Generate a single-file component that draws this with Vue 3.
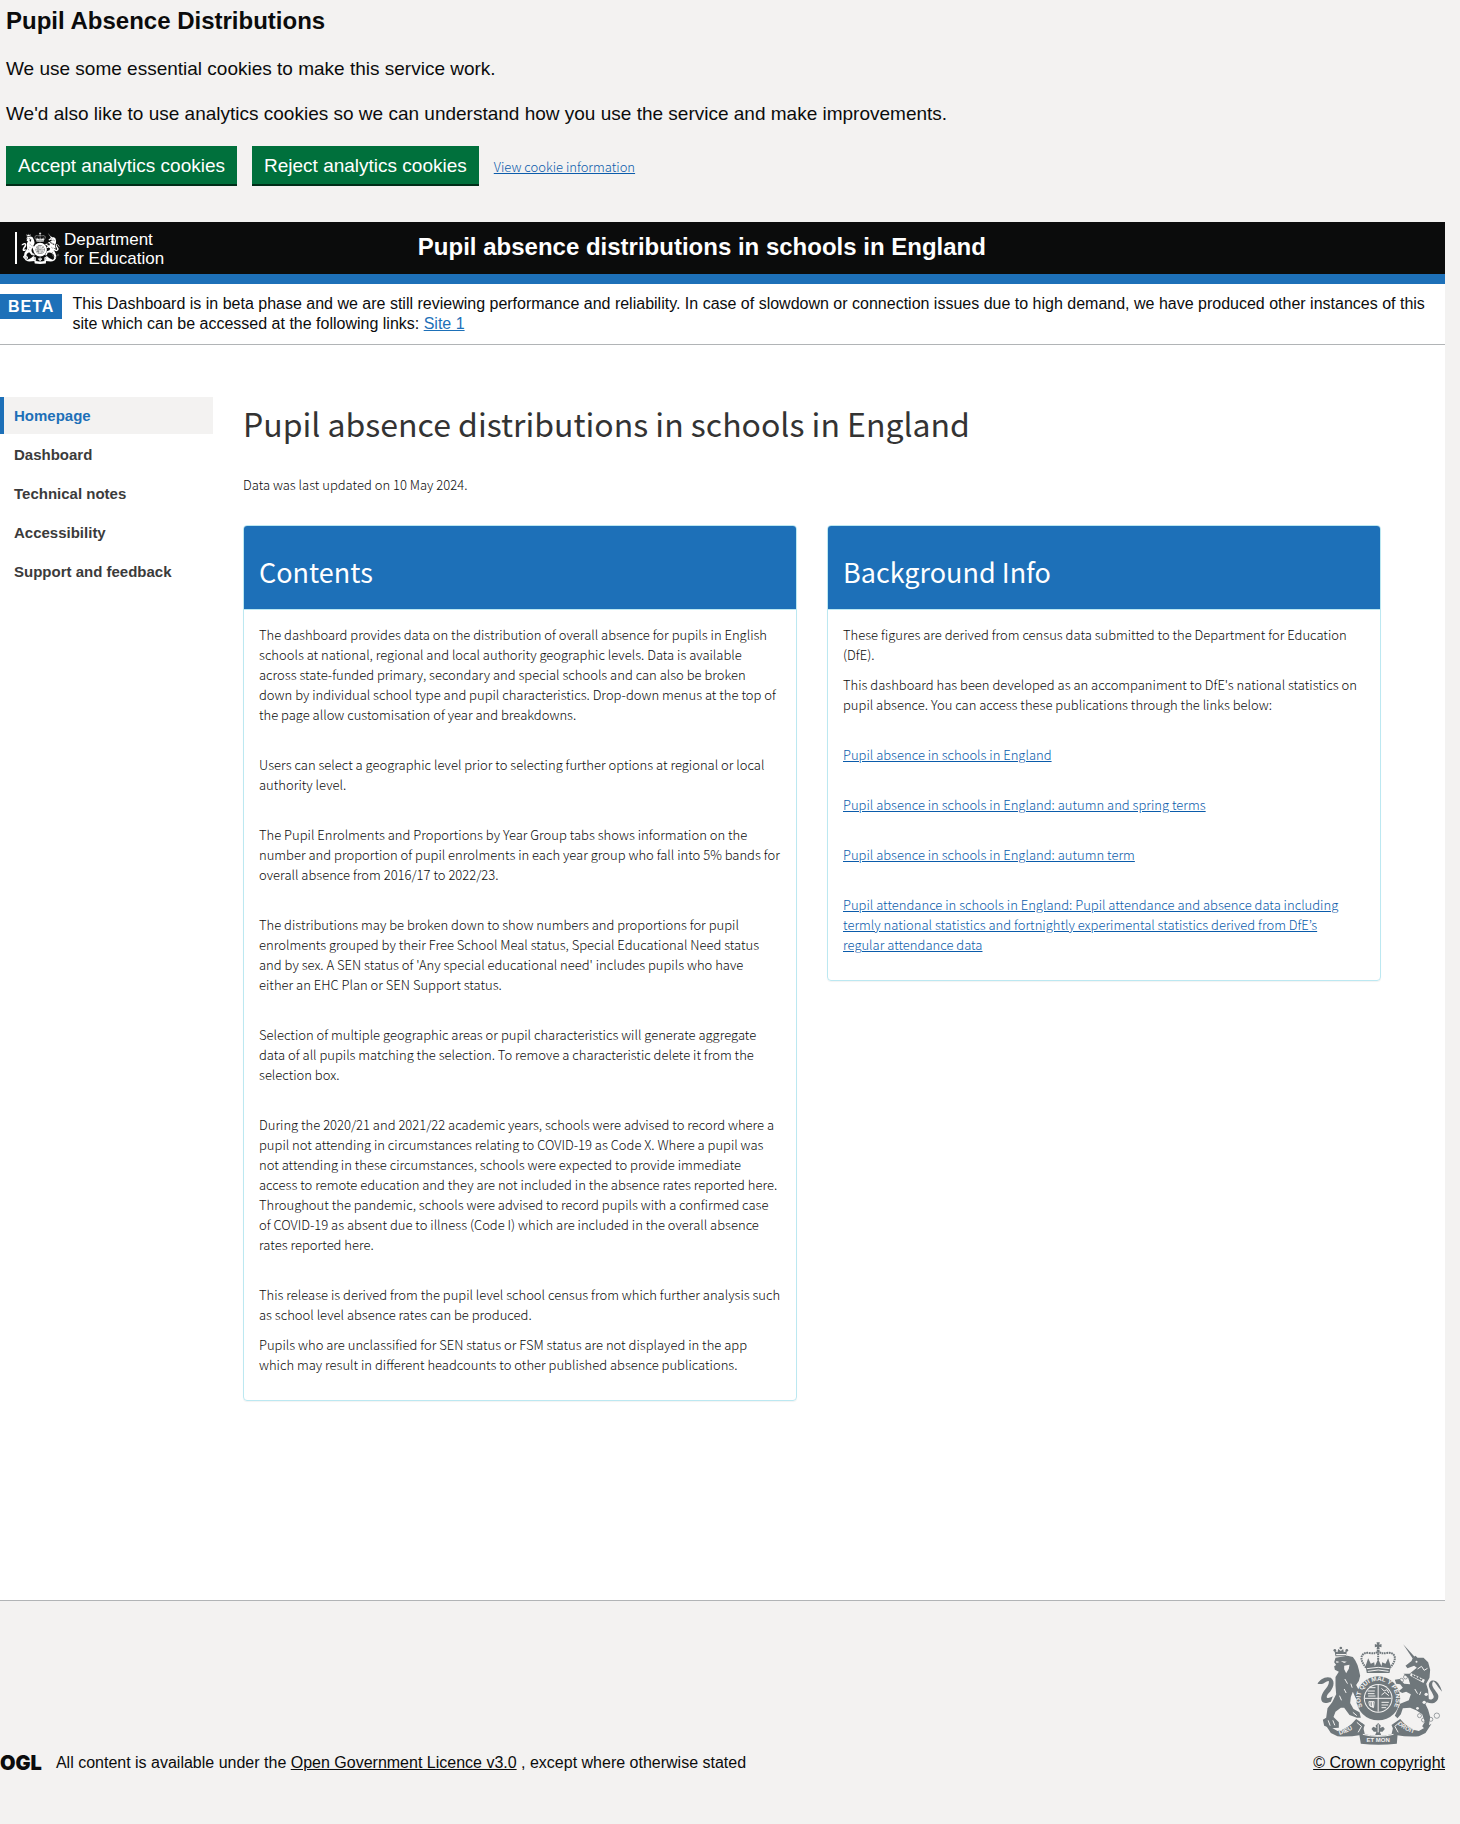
<script setup>
const navItems = ['Homepage', 'Dashboard', 'Technical notes', 'Accessibility', 'Support and feedback']

const contents = [
  {
    text: `The dashboard provides data on the distribution of overall absence for pupils in English
schools at national, regional and local authority geographic levels. Data is available
across state-funded primary, secondary and special schools and can also be broken
down by individual school type and pupil characteristics. Drop-down menus at the top of
the page allow customisation of year and breakdowns.`
  },
  {
    text: `Users can select a geographic level prior to selecting further options at regional or local
authority level.`
  },
  {
    text: `The Pupil Enrolments and Proportions by Year Group tabs shows information on the
number and proportion of pupil enrolments in each year group who fall into 5% bands for
overall absence from 2016/17 to 2022/23.`
  },
  {
    text: `The distributions may be broken down to show numbers and proportions for pupil
enrolments grouped by their Free School Meal status, Special Educational Need status
and by sex. A SEN status of 'Any special educational need' includes pupils who have
either an EHC Plan or SEN Support status.`
  },
  {
    text: `Selection of multiple geographic areas or pupil characteristics will generate aggregate
data of all pupils matching the selection. To remove a characteristic delete it from the
selection box.`
  },
  {
    text: `During the 2020/21 and 2021/22 academic years, schools were advised to record where a
pupil not attending in circumstances relating to COVID-19 as Code X. Where a pupil was
not attending in these circumstances, schools were expected to provide immediate
access to remote education and they are not included in the absence rates reported here.
Throughout the pandemic, schools were advised to record pupils with a confirmed case
of COVID-19 as absent due to illness (Code I) which are included in the overall absence
rates reported here.`
  },
  {
    text: `This release is derived from the pupil level school census from which further analysis such
as school level absence rates can be produced.`
  },
  {
    text: `Pupils who are unclassified for SEN status or FSM status are not displayed in the app
which may result in different headcounts to other published absence publications.`,
    tight: true
  }
]

const background = [
  {
    text: `These figures are derived from census data submitted to the Department for Education
(DfE).`
  },
  {
    text: `This dashboard has been developed as an accompaniment to DfE's national statistics on
pupil absence. You can access these publications through the links below:`,
    tight: true
  }
]

const links = [
  'Pupil absence in schools in England',
  'Pupil absence in schools in England: autumn and spring terms',
  'Pupil absence in schools in England: autumn term',
  `Pupil attendance in schools in England: Pupil attendance and absence data including
termly national statistics and fortnightly experimental statistics derived from DfE’s
regular attendance data`
]
</script>

<template>
  <svg class="sprite" aria-hidden="true">
    <symbol id="arms" viewBox="48 62 380 312">
      <!-- lion -->
      <g class="ink">
        <path d="M106 108 L103 91 L112 96 L114 86 L122 92 L129 86 L131 96 L140 91 L138 108 Z" />
        <circle cx="122" cy="83" r="4" /><circle cx="104" cy="90" r="4" /><circle cx="140" cy="90" r="4" />
        <path d="M106 112 L142 106 L158 110 L165 120 L172 134 L176 148 L180 166 L176 182 L168 194 L174 206 L186 212 L188 222 L178 226 L183 236 L176 246 L166 232 L158 214 L152 230 L150 248 L160 266 L178 276 L182 292 L170 292 L148 284 L132 262 L122 262 L106 274 L100 290 L116 306 L116 322 L92 324 L72 316 L68 298 L78 292 L82 264 L96 246 L108 222 L106 196 L106 170 L116 154 L104 148 L102 138 L108 134 L102 126 Z" />
        <path d="M92 244 C66 256 58 240 66 222 C72 206 88 198 86 182 C78 180 70 196 52 190 C58 178 76 166 92 172 C108 184 98 206 86 218 C74 232 80 238 98 228 Z" />
      </g>
      <g class="cut"><path d="M108 122 l10 3 -9 3z M132 136 l16 -3 -2 12 -8 14 -6 -12z M122 122 l18 2 -8 4z M108 101 h30 v4 h-30z" /></g>
      <g class="cutline"><path d="M134 176 l8 14 M152 190 l4 12 M118 226 l6 14 M84 300 l6 16 M98 300 l6 15 M158 276 l12 10 M132 206 l6 12" /></g>
      <!-- unicorn -->
      <g class="ink">
        <path d="M309 72 L344 110 L337 114 Z" />
        <path d="M338 112 L346 106 L352 112 L370 112 L384 126 L390 148 L388 172 L378 190 L384 210 L386 236 L376 252 L384 268 L390 290 L386 318 L376 328 L366 318 L374 304 L366 282 L348 270 L330 262 L308 264 L302 282 L292 294 L284 286 L300 250 L326 240 L332 222 L318 214 L306 218 L296 212 L308 202 L300 192 L288 190 L284 178 L298 176 L312 190 L330 192 L324 172 L310 160 L328 160 L350 142 L342 136 L322 144 L316 136 L334 122 Z" />
        <path d="M380 246 C402 256 418 240 414 224 C408 210 390 198 398 184 C404 180 410 198 426 214 C418 190 408 176 392 182 C376 196 396 212 400 226 C404 236 390 242 378 232 Z" />
      </g>
      <g class="line">
        <circle cx="304" cy="180" r="6" /><circle cx="316" cy="170" r="6" /><circle cx="358" cy="286" r="6" /><circle cx="370" cy="299" r="6" /><circle cx="392" cy="297" r="6" /><circle cx="410" cy="286" r="8" />
        <path d="M376 299 h10" />
      </g>
      <g class="cut"><path d="M332 158 l42 20 -4 10 -40 -22z" /><circle cx="349" cy="124" r="3" /><circle cx="378" cy="222" r="5" /><circle cx="372" cy="246" r="5" /><circle cx="352" cy="264" r="4" /></g>
      <g class="cutline"><path d="M352 146 l12 -8 8 12 10 -6 M344 206 l8 14 M362 214 l-4 10" /></g>
      <g class="ink"><path d="M338 160 l5 8 5 -4 3 9 6 -5 4 9 7 -4 -3 9 -30 -14z" /></g>
      <!-- crown -->
      <g class="ink">
        <path d="M229 66 h10 l-2 7 7 -2 v10 l-7 -2 2 8 h-10 l2 -8 -7 2 v-10 l7 2z" />
        <path d="M196 138 L204 114 L212 130 L222 126 L224 138 L234 116 L244 138 L246 126 L256 130 L264 114 L272 138 L268 158 H200 Z" />
      </g>
      <path class="beads" d="M198 142 C172 112 186 94 208 98 C222 100 230 100 234 88 C238 100 246 100 260 98 C282 94 296 112 270 142 M234 92 V118" />
      <g class="cutline"><path d="M200 145 Q234 137 268 145 M203 153 Q234 145 265 153" /></g>
      <!-- garter and shield -->
      <circle class="ink" cx="234" cy="234" r="66" />
      <circle class="cut" cx="234" cy="234" r="43" />
      <circle class="ink" cx="234" cy="234" r="40" />
      <g class="cutline">
        <path d="M234 194 V274 M194 234 H274" />
        <path d="M202 212 l22 0 M203 220 l20 0 M208 202 l18 0 M204 227 h22 M244 204 l8 8 8 -4 6 10 M244 224 l10 -8 12 10 M206 244 l16 0 -2 18 -12 -6z M212 244 v16 M217 244 v16 M244 246 h22 M244 254 h20 M244 262 h14" />
      </g>
      <!-- ribbon -->
      <g class="ink">
        <path d="M74 310 L112 332 Q144 326 168 296 L194 314 L182 344 Q148 350 112 348 L92 338 Z" />
        <path d="M394 310 L356 332 Q324 326 300 296 L274 314 L286 344 Q320 350 356 348 L376 338 Z" />
        <path d="M174 322 L186 308 L194 342 Q234 352 274 342 L282 308 L294 322 L290 370 Q234 376 182 370 Z" />
        <path d="M234 308 l8 8 -3 7 10 -4 5 7 -7 8 -8 0 4 10 h-18 l4 -10 -8 0 -7 -8 5 -7 10 4 -3 -7z" />
      </g>
      <g class="cutline"><path d="M170 306 L184 318 L174 336 M298 306 L284 318 L294 336 M234 312 v24 M188 342 Q234 354 280 342" /></g>
    </symbol>
  </svg>

  <div class="page">
    <section class="cookies" aria-label="Cookies">
      <h2>Pupil Absence Distributions</h2>
      <p>We use some essential cookies to make this service work.</p>
      <p>We'd also like to use analytics cookies so we can understand how you use the service and make improvements.</p>
      <div class="cookie-actions">
        <button type="button">Accept analytics cookies</button>
        <button type="button">Reject analytics cookies</button>
        <a href="#cookies">View cookie information</a>
      </div>
    </section>

    <div class="container">
      <header class="header">
        <a class="brand" href="#home">
          <svg class="brand-arms" aria-hidden="true"><use href="#arms" /></svg>
          <span>Department<br />for Education</span>
        </a>
        <div class="service">Pupil absence distributions in schools in England</div>
      </header>

      <div class="phase">
        <strong class="tag">BETA</strong>
        <p>This Dashboard is in beta phase and we are still reviewing performance and reliability. In case of slowdown or connection issues due to high demand, we have produced other instances of this site which can be accessed at the following links: <a href="#site1">Site 1</a></p>
      </div>

      <div class="layout">
        <nav class="nav" aria-label="Sections">
          <a v-for="(item, i) in navItems" :key="item" href="#" :class="{ active: i === 0 }">{{ item }}</a>
        </nav>
        <main class="main">
          <h1>Pupil absence distributions in schools in England</h1>
          <p class="updated">Data was last updated on 10 May 2024.</p>
          <div class="cards">
            <section class="card">
              <h2>Contents</h2>
              <div class="card-body">
                <p v-for="p in contents" :key="p.text" :class="{ tight: p.tight }">{{ p.text }}</p>
              </div>
            </section>
            <section class="card">
              <h2>Background Info</h2>
              <div class="card-body">
                <p v-for="p in background" :key="p.text" :class="{ tight: p.tight }">{{ p.text }}</p>
                <p v-for="link in links" :key="link"><a href="#">{{ link }}</a></p>
              </div>
            </section>
          </div>
        </main>
      </div>

      <footer class="footer">
        <div class="licence">
          <span class="ogl">OGL</span>
          <span>All content is available under the <a href="#ogl">Open Government Licence v3.0</a> , except where otherwise stated</span>
        </div>
        <a class="crown" href="#copyright">
          <svg class="crown-arms" viewBox="48 62 380 312" aria-hidden="true">
            <defs>
              <path id="motto" d="M187 259 A53 53 0 1 1 281 259" />
              <path id="dieu" d="M118 343 Q148 336 174 314" />
              <path id="droit" d="M292 312 Q316 334 354 343" />
            </defs>
            <use href="#arms" x="48" y="62" width="380" height="312" />
            <text class="motto"><textPath href="#motto">SOIT QUI MAL Y PENSE</textPath></text>
            <text class="ribbon"><textPath href="#dieu">DIEU</textPath></text>
            <text class="ribbon"><textPath href="#droit">DROIT</textPath></text>
            <text class="ribbon" x="234" y="366" text-anchor="middle">ET MON</text>
          </svg>
          <span>© Crown copyright</span>
        </a>
      </footer>
    </div>
  </div>
</template>

<style>
html {
  background: #f3f2f1;
}
</style>

<style scoped>
.page {
  font: 300 13px/20px "Source Sans Pro", "Noto Sans CJK KR", sans-serif;
  color: #0b0c0c;
}
.sprite {
  position: absolute;
  width: 0;
  height: 0;
}
h1, h2, p {
  margin: 0;
}
h1, h2 {
  font-weight: 400;
}
a {
  color: #1d70b8;
}
.ink {
  fill: currentColor;
}
.cut {
  fill: var(--cut);
}
.line {
  fill: none;
  stroke: currentColor;
  stroke-width: 2;
}
.cutline {
  fill: none;
  stroke: var(--cut);
  stroke-width: 3;
}
.beads {
  fill: none;
  stroke: currentColor;
  stroke-width: 6;
  stroke-dasharray: 5 2;
}

.cookies {
  padding: 6px 6px 38px;
  font: 19px/25px "Liberation Sans", Arial, sans-serif;
}
.cookies h2 {
  font-size: 24px;
  line-height: 30px;
  font-weight: 700;
  margin-bottom: 20px;
}
.cookies p {
  margin-bottom: 20px;
}
.cookie-actions {
  display: flex;
  align-items: center;
  gap: 15px;
}
.cookie-actions button {
  border: 0;
  background: #00703c;
  box-shadow: 0 2px 0 #002d18;
  color: #fff;
  font: 19px/22px "Liberation Sans", Arial, sans-serif;
  padding: 9px 12px 7px;
}
.cookie-actions a {
  padding-top: 4px;
  font: 300 13px/20px "Source Sans Pro", "Noto Sans CJK KR", sans-serif;
}
.cookie-actions a,
.card-body a {
  color: #0b5cab;
}

.container {
  margin-right: 15px;
  background: #fff;
}
.header {
  display: grid;
  grid-template-columns: 2fr 5fr;
  align-items: center;
  min-height: 52px;
  background: #0b0c0c;
  border-bottom: 10px solid #1d70b8;
  font-family: "Liberation Sans", Arial, sans-serif;
  color: #fff;
}
.brand {
  display: flex;
  align-items: center;
  gap: 4px;
  margin-left: 15px;
  color: #fff;
  text-decoration: none;
  font-size: 17px;
  line-height: 19px;
}
.brand span {
  padding-top: 1px;
}
.brand-arms {
  --cut: #0b0c0c;
  width: 39px;
  height: 32px;
  padding-left: 4px;
  border-left: 2px solid #fff;
}
.service {
  padding: 0 5px 2px;
  font-size: 24px;
  line-height: 30px;
  font-weight: 700;
}

.phase {
  display: flex;
  align-items: flex-start;
  gap: 10px;
  padding: 10px 15px 10px 0;
  border-bottom: 1px solid #b1b4b6;
  font: 16px/20px "Liberation Sans", Arial, sans-serif;
}
.tag {
  padding: 3px 8px 2px;
  background: #1d70b8;
  color: #fff;
  letter-spacing: 1px;
}

.layout {
  display: flex;
  gap: 30px;
  padding: 52px 64px 199px 0;
}
.nav {
  flex: 0 0 213px;
  display: flex;
  flex-direction: column;
  gap: 2px;
  font: 700 15px/21px "Liberation Sans", Arial, sans-serif;
}
.nav a {
  padding: 8px 10px;
  border-left: 4px solid transparent;
  color: #3b3b3b;
  text-decoration: none;
}
.nav .active {
  border-color: #1d70b8;
  background: #f3f2f1;
  color: #1d70b8;
}
.main {
  flex: 1;
}
h1 {
  font-size: 32px;
  line-height: 40px;
  margin: 6px 0 32px;
  color: #333;
}
.updated {
  margin-bottom: 30px;
}
.cards {
  display: grid;
  grid-template-columns: 1fr 1fr;
  gap: 30px;
  align-items: start;
}
.card {
  border: 1px solid #bce8f1;
  border-radius: 4px;
  box-shadow: 0 1px 1px rgba(0, 0, 0, 0.05);
  overflow: hidden;
}
.card h2 {
  padding: 30px 15px 21px;
  border-bottom: 1px solid #bce8f1;
  background: #1d70b8;
  color: #fff;
  font-size: 27px;
  line-height: 32px;
}
.card-body {
  padding: 15px 10px 25px 15px;
  white-space: pre-line;
}
.card-body p + p {
  margin-top: 30px;
}
.card-body p.tight {
  margin-top: 10px;
}

.footer {
  display: flex;
  justify-content: space-between;
  align-items: flex-end;
  flex-wrap: wrap;
  padding: 40px 0 50px;
  border-top: 1px solid #b1b4b6;
  background: #f3f2f1;
  font: 16px/20px "Liberation Sans", Arial, sans-serif;
}
.footer a {
  color: #0b0c0c;
}
.licence {
  display: flex;
  align-items: center;
  gap: 14px;
}
.ogl {
  font: 900 20px/20px Inter, sans-serif;
}
.crown {
  display: flex;
  flex-direction: column;
  align-items: flex-end;
  gap: 8px;
}
.footer .crown-arms {
  --cut: #f3f2f1;
  width: 127px;
  height: 104px;
  margin-right: 2px;
  color: #6f777b;
}
.motto, .ribbon {
  fill: var(--cut);
  font: 700 18px "Liberation Sans", Arial, sans-serif;
}
.motto {
  font-size: 19px;
}
</style>
